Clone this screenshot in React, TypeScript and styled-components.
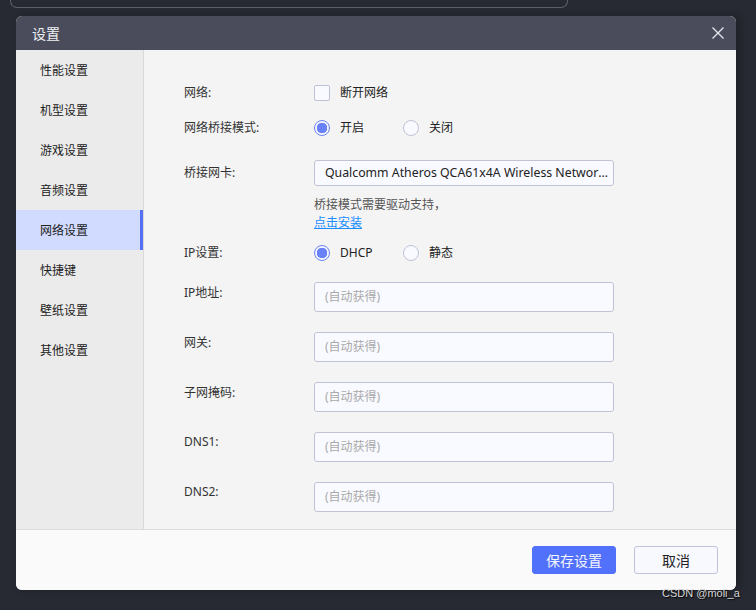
import styled, { createGlobalStyle } from 'styled-components';

const GlobalStyle = createGlobalStyle`
  html, body {
    margin: 0;
    padding: 0;
    background: #282a33;
    font-family: "Noto Sans", "Noto Sans CJK SC", sans-serif;
  }
  #root {
    position: relative;
    height: 610px;
    overflow: hidden;
  }
`;

const menuItems = ['性能设置', '机型设置', '游戏设置', '音频设置', '网络设置', '快捷键', '壁纸设置', '其他设置'];
const inputRows = ['IP地址:', '网关:', '子网掩码:', 'DNS1:', 'DNS2:'];

const CloseIcon = () => (
  <svg width="12" height="12" viewBox="0 0 12 12">
    <path d="M0.5 0.5 L11.5 11.5 M11.5 0.5 L0.5 11.5" stroke="#e6e7ec" strokeWidth="1.3" fill="none" />
  </svg>
);

const App = () => {
  return (
    <>
      <GlobalStyle />
      <BackPanel />
      <Dialog>
        <Header>
          <span>设置</span>
          <CloseButton>
            <CloseIcon />
          </CloseButton>
        </Header>
        <Main>
          <Sidebar>
            {menuItems.map((item) => (
              <MenuItem key={item} $active={item === '网络设置'}>
                {item}
              </MenuItem>
            ))}
          </Sidebar>
          <Content>
            <Row $top={35}>
              <Label $lh={16}>网络:</Label>
              <OptionGroup>
                <Option>
                  <Checkbox />
                  断开网络
                </Option>
              </OptionGroup>
            </Row>
            <Row $top={19}>
              <Label $lh={16}>网络桥接模式:</Label>
              <OptionGroup>
                <Option>
                  <Radio $checked />
                  开启
                </Option>
                <Option>
                  <Radio />
                  关闭
                </Option>
              </OptionGroup>
            </Row>
            <Row $top={24}>
              <Label $lh={26}>桥接网卡:</Label>
              <Select>Qualcomm Atheros QCA61x4A Wireless Network Adapter</Select>
            </Row>
            <Row $top={10}>
              <span />
              <Hint>
                桥接模式需要驱动支持，
                <br />
                <Link>点击安装</Link>
              </Hint>
            </Row>
            <Row $top={13}>
              <Label $lh={16}>IP设置:</Label>
              <OptionGroup>
                <Option>
                  <Radio $checked />
                  DHCP
                </Option>
                <Option>
                  <Radio />
                  静态
                </Option>
              </OptionGroup>
            </Row>
            {inputRows.map((label, i) => (
              <Row key={label} $top={i === 0 ? 21 : 20}>
                <Label $lh={i > 2 ? 20 : 22}>{label}</Label>
                <Input>(自动获得)</Input>
              </Row>
            ))}
          </Content>
        </Main>
        <Footer>
          <Button $primary>保存设置</Button>
          <Button>取消</Button>
        </Footer>
      </Dialog>
      <Watermark>CSDN @moli_a</Watermark>
    </>
  );
};

export default App;

const BackPanel = styled.div`
  margin-left: 10px;
  width: 556px;
  height: 7px;
  border: 1px solid #5d606b;
  border-top: none;
  border-radius: 0 0 7px 7px;
`;

const Dialog = styled.div`
  margin: 8px 0 0 16px;
  width: 720px;
  height: 574px;
  display: flex;
  flex-direction: column;
  border-radius: 6px;
  overflow: hidden;
  box-shadow: 4px 0 8px rgba(0, 0, 0, 0.25);
  background: #fafafa;
`;

const Header = styled.div`
  height: 34px;
  flex: none;
  display: flex;
  align-items: center;
  justify-content: space-between;
  padding: 0 12px 0 16px;
  background: #4a4c5b;
  color: #eef0f4;
  font-size: 14px;
`;

const CloseButton = styled.div`
  display: flex;
  align-items: center;
`;

const Main = styled.div`
  flex: 1;
  display: flex;
  border-bottom: 1px solid #dcdcdc;
`;

const Sidebar = styled.div`
  width: 127px;
  flex: none;
  background: #ebebeb;
  border-right: 1px solid #d9d9d9;
`;

const MenuItem = styled.div<{ $active?: boolean }>`
  box-sizing: border-box;
  height: 40px;
  padding: 1px 0 0 24px;
  line-height: 39px;
  font-size: 12px;
  color: #222;
  background: ${({ $active }) => ($active ? '#d1dbff' : 'transparent')};
  box-shadow: ${({ $active }) => ($active ? 'inset -3px 0 0 #5670f3' : 'none')};
`;

const Content = styled.div`
  flex: 1;
  background: #f4f4f4;
  padding-left: 40px;
`;

const Row = styled.div<{ $top: number }>`
  display: grid;
  grid-template-columns: 130px 300px;
  align-items: start;
  margin-top: ${({ $top }) => $top}px;
`;

const Label = styled.div<{ $lh: number }>`
  font-size: 12px;
  color: #333;
  line-height: ${({ $lh }) => $lh}px;
`;

const OptionGroup = styled.div`
  display: flex;
`;

const Option = styled.label`
  display: flex;
  align-items: center;
  gap: 10px;
  min-width: 89px;
  font-size: 12px;
  line-height: 16px;
  color: #222;
`;

const Checkbox = styled.span`
  width: 14px;
  height: 14px;
  border: 1px solid #bfc2d4;
  border-radius: 2px;
  background: #f9faff;
`;

const Radio = styled.span<{ $checked?: boolean }>`
  box-sizing: border-box;
  width: 16px;
  height: 16px;
  border-radius: 50%;
  border: 1px solid ${({ $checked }) => ($checked ? '#6d84f5' : '#bfc2d4')};
  background: ${({ $checked }) => ($checked ? 'radial-gradient(circle, #6a82f7 0 5px, #f2f4ff 5.5px)' : '#f9faff')};
`;

const Field = styled.div`
  box-sizing: border-box;
  width: 300px;
  border: 1px solid #c0c3d6;
  border-radius: 3px;
  background: #f9faff;
  padding: 0 10px;
  font-size: 12px;
  white-space: nowrap;
  overflow: hidden;
  text-overflow: ellipsis;
`;

const Select = styled(Field)`
  height: 26px;
  line-height: 24px;
  color: #222;
  font-size: 12.3px;
  padding-right: 3px;
`;

const Input = styled(Field)`
  height: 30px;
  line-height: 28px;
  color: #a9a9a9;
`;

const Hint = styled.div`
  font-size: 12px;
  line-height: 18px;
  color: #555;
`;

const Link = styled.a`
  color: #1a8dff;
  text-decoration: underline;
  cursor: pointer;
`;

const Footer = styled.div`
  height: 60px;
  flex: none;
  display: flex;
  justify-content: flex-end;
  align-items: flex-start;
  gap: 18px;
  padding: 16px 18px 0 0;
  box-sizing: border-box;
  background: #fafafa;
`;

const Button = styled.button<{ $primary?: boolean }>`
  width: 84px;
  height: 28px;
  border-radius: 3px;
  font-family: "Noto Sans CJK SC", sans-serif;
  font-size: 14px;
  padding: 0;
  border: 1px solid ${({ $primary }) => ($primary ? '#5271fa' : '#c0c3d6')};
  background: ${({ $primary }) => ($primary ? '#5271fa' : '#f8f9fe')};
  color: ${({ $primary }) => ($primary ? '#f4f6ff' : '#222')};
`;

const Watermark = styled.div`
  position: absolute;
  left: 662px;
  top: 587px;
  font-family: "Liberation Sans", sans-serif;
  font-size: 11px;
  color: #d6d6d6;
  text-shadow: 1px 1px 1px #000;
`;
